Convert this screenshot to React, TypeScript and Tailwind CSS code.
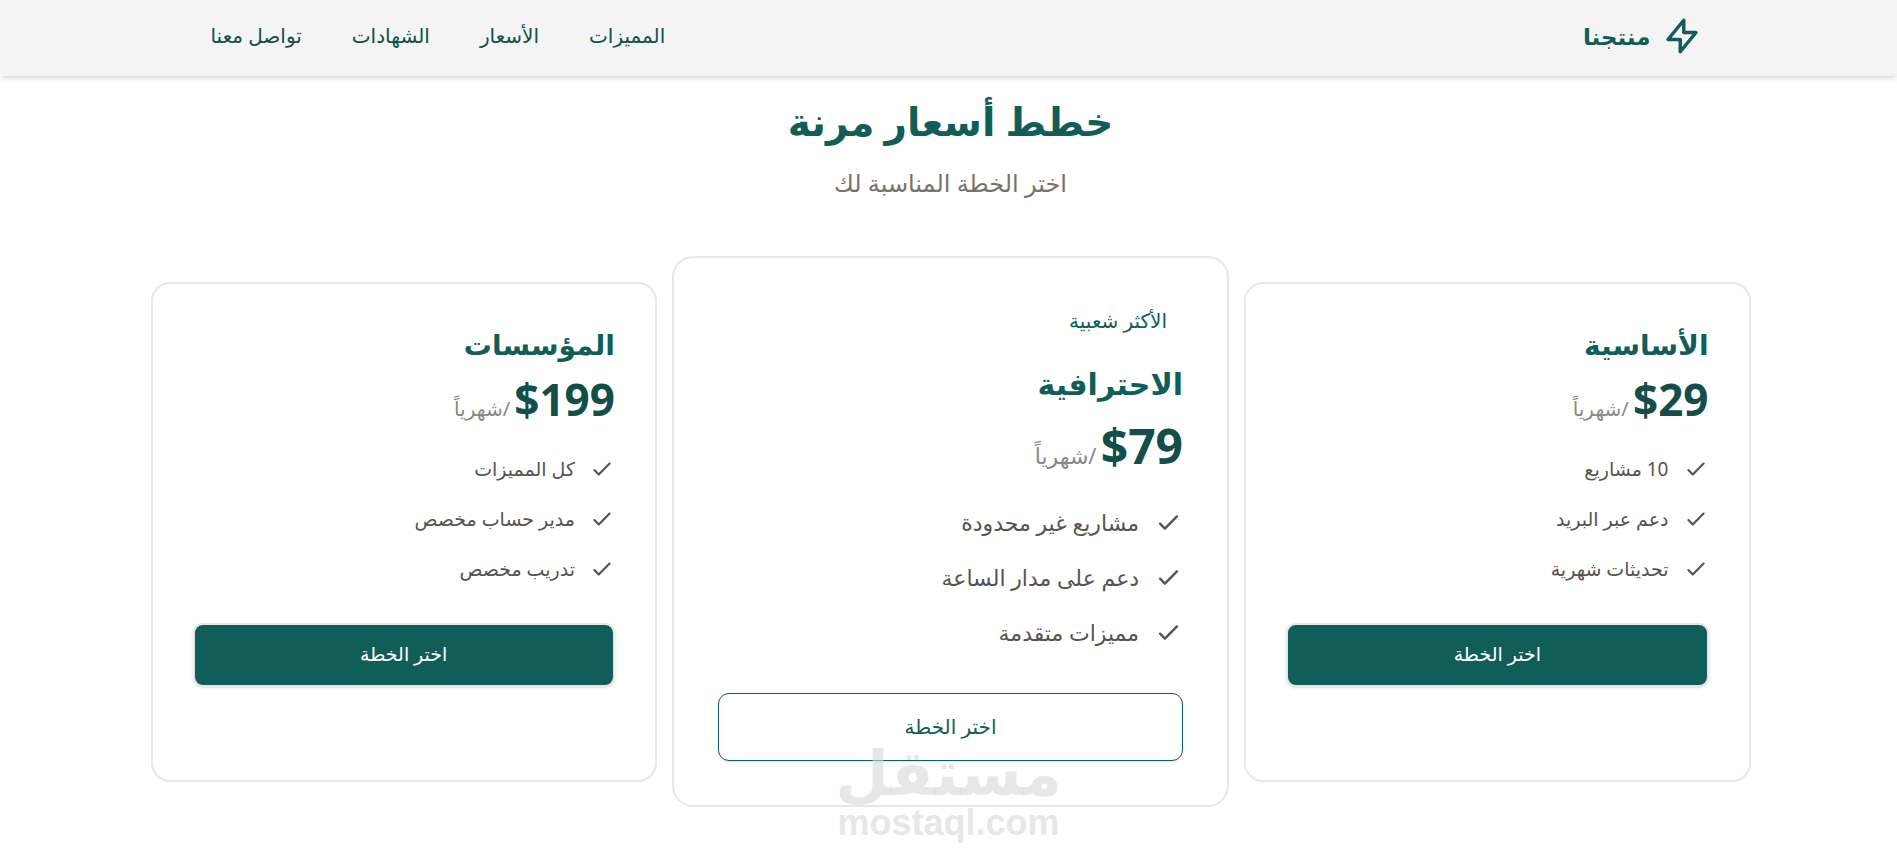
import clsx from 'clsx';

const navLinks = [
  { label: 'المميزات', href: '#features' },
  { label: 'الأسعار', href: '#pricing' },
  { label: 'الشهادات', href: '#testimonials' },
  { label: 'تواصل معنا', href: '#contact' },
];

const plans = [
  {
    name: 'الأساسية',
    price: '$29',
    features: ['10 مشاريع', 'دعم عبر البريد', 'تحديثات شهرية'],
    popular: false,
  },
  {
    name: 'الاحترافية',
    price: '$79',
    features: ['مشاريع غير محدودة', 'دعم على مدار الساعة', 'مميزات متقدمة'],
    popular: true,
  },
  {
    name: 'المؤسسات',
    price: '$199',
    features: ['كل المميزات', 'مدير حساب مخصص', 'تدريب مخصص'],
    popular: false,
  },
];

type Plan = (typeof plans)[number];

function Icon({ path, className }: { path: string; className: string }) {
  return (
    <svg
      viewBox="0 0 24 24"
      fill="none"
      stroke="currentColor"
      strokeWidth="2"
      strokeLinecap="round"
      strokeLinejoin="round"
      className={className}
      aria-hidden="true"
    >
      <path d={path} />
    </svg>
  );
}

function Header() {
  return (
    <header className="sticky top-0 z-10 bg-[#f4f4f4] pl-1 shadow-md">
      <div className="mx-auto flex h-[76px] max-w-[1504px] items-center justify-between pb-1">
        <a href="#" className="flex items-center gap-[10px] text-[23px] font-bold text-[#115e59]">
          <Icon path="M13 10V3L4 14h7v7l9-11h-7z" className="size-[42px]" />
          <span>منتجنا</span>
        </a>
        <nav className="flex gap-[50px] pl-3 text-[20px] text-[#134e4a]">
          {navLinks.map((link) => (
            <a key={link.href} href={link.href}>
              {link.label}
            </a>
          ))}
        </nav>
      </div>
    </header>
  );
}

function PlanCard({ plan }: { plan: Plan }) {
  return (
    <article
      className={clsx(
        'border-2 border-gray-200 bg-white',
        plan.popular ? 'rounded-[21px] p-11' : 'min-h-[500px] rounded-[19px] p-10',
      )}
    >
      {plan.popular && (
        <p className="mb-[18px] px-4 text-[20px] leading-[38px] font-medium text-[#115e59]">الأكثر شعبية</p>
      )}
      <h3
        className={clsx(
          'font-bold text-[#115e59]',
          plan.popular ? 'mb-1 text-[30px] leading-[52px]' : 'mb-[6px] text-[28px] leading-[40px]',
        )}
      >
        {plan.name}
      </h3>
      <p className={clsx(plan.popular ? 'mb-[30px] h-16 leading-[64px]' : 'mb-7 h-[58px] leading-[58px]')}>
        <span className={clsx('font-bold text-[#134e4a]', plan.popular ? 'text-[48px]' : 'text-[44px]')}>
          {plan.price}
        </span>{' '}
        <span className={clsx('text-[#8a8a85]', plan.popular ? 'text-[22px]' : 'text-[20px]')}>/شهرياً</span>
      </p>
      <ul
        className={clsx(
          'flex flex-col text-[#57534e]',
          plan.popular ? 'gap-[26px] text-[22px] leading-[29px]' : 'gap-6 text-[19px] leading-[26px]',
        )}
      >
        {plan.features.map((feature) => (
          <li key={feature} className={clsx('flex items-center', plan.popular ? 'gap-[15px]' : 'gap-[14px]')}>
            <Icon path="M5 13l4 4L19 7" className={plan.popular ? 'size-[29px]' : 'size-[26px]'} />
            <span>{feature}</span>
          </li>
        ))}
      </ul>
      <button
        type="button"
        className={clsx(
          'w-full font-medium',
          plan.popular
            ? 'mt-[46px] h-[68px] rounded-[11px] border border-[#115e59] bg-white text-[20px] text-[#115e59] shadow-sm'
            : 'mt-[41px] h-16 rounded-[10px] border-2 border-gray-200 bg-[#115e59] text-[19px] text-white shadow-sm',
        )}
      >
        اختر الخطة
      </button>
    </article>
  );
}

function Watermark() {
  return (
    <div className="pointer-events-none absolute inset-x-0 bottom-[17px] flex flex-col items-center font-bold text-[#d5d8d7]/60">
      <span className="font-['DejaVu_Sans',sans-serif] text-[62px] leading-[58px]">مستقل</span>
      <span className="font-['Liberation_Sans',sans-serif] text-[36px] leading-[40px]">mostaql.com</span>
    </div>
  );
}

export default function App() {
  return (
    <div dir="rtl" className="relative min-h-screen bg-white font-['Noto_Sans','DejaVu_Sans',sans-serif]">
      <Header />
      <main id="pricing" className="pt-[15px] pb-10 pl-1">
        <div className="text-center">
          <h2 className="text-[39px] leading-[60px] font-bold text-[#115e59]">خطط أسعار مرنة</h2>
          <p className="mt-3 text-[24px] leading-[40px] text-[#78716c]">اختر الخطة المناسبة لك</p>
        </div>
        <div className="mx-auto mt-[53px] grid max-w-[1600px] items-center gap-[15px] lg:grid-cols-[1fr_1.1fr_1fr]">
          {plans.map((plan) => (
            <PlanCard key={plan.name} plan={plan} />
          ))}
        </div>
      </main>
      <Watermark />
    </div>
  );
}
